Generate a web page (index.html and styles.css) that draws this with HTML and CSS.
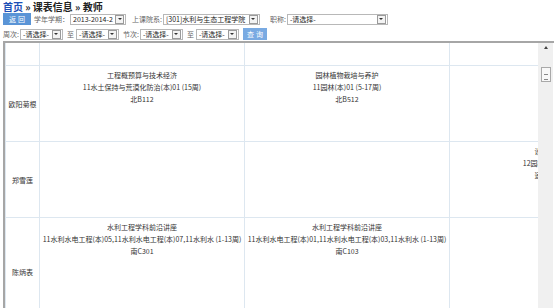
FILE: index.html
```
<!DOCTYPE html>
<html>
<head>
<meta charset="utf-8">
<title>教师课表</title>
<link rel="stylesheet" href="styles.css">
</head>
<body>
<div class="crumb"><a class="home" href="#">首页</a> » 课表信息 » 教师</div>

<div class="bar">
<span class="btn btn-back">返回</span>
<span class="lbl lbl-term">学年学期：</span>
<span class="sel sel-term"><span class="v">2013-2014-2</span><span class="arr"></span></span>
<span class="lbl lbl-dept">上课院系:</span>
<span class="sel sel-dept"><span class="v">[301]水利与生态工程学院</span><span class="arr"></span></span>
<span class="lbl lbl-title">职称:</span>
<span class="sel sel-title"><span class="v">-请选择-</span><span class="arr"></span></span>
</div>

<div class="bar bar-second">
<span class="lbl">周次:</span>
<span class="sel sel-small"><span class="v">-请选择-</span><span class="arr"></span></span>
<span class="lbl lbl-to">至</span>
<span class="sel sel-small"><span class="v">-请选择-</span><span class="arr"></span></span>
<span class="lbl lbl-sec">节次:</span>
<span class="sel sel-small"><span class="v">-请选择-</span><span class="arr"></span></span>
<span class="lbl lbl-to">至</span>
<span class="sel sel-small"><span class="v">-请选择-</span><span class="arr"></span></span>
<span class="btn btn-query">查询</span>
</div>

<div class="frame">
<div class="grid-wrap">
<table class="sched">
<colgroup><col class="c-name"><col class="c-day"><col class="c-day"><col class="c-day"></colgroup>
<tr class="head"><td></td><td></td><td></td><td></td></tr>
<tr class="r1">
<td class="name">欧阳菊根</td>
<td>工程概预算与技术经济<br>11水土保持与荒漠化防治(本)01 (15周)<br>北B112</td>
<td>园林植物栽培与养护<br>11园林(本)01 (5-17周)<br>北B512</td>
<td></td>
</tr>
<tr class="r2">
<td class="name">郑雪莲</td>
<td></td>
<td></td>
<td>设施园艺学<br>12园林(本)01 (5周)<br>速写教室一</td>
</tr>
<tr class="r3">
<td class="name">陈炳表</td>
<td>水利工程学科前沿讲座<br>11水利水电工程(本)05,11水利水电工程(本)07,11水利水 (1-13周)<br>南C301</td>
<td>水利工程学科前沿讲座<br>11水利水电工程(本)01,11水利水电工程(本)03,11水利水 (1-13周)<br>南C103</td>
<td></td>
</tr>
</table>
</div>
<div class="vscroll"><span class="up"></span><span class="thumb"></span></div>
</div>
</body>
</html>
```
FILE: styles.css
```
/* Teacher timetable page */

html, body
{ margin: 0;
}

body
{ padding: 0 3px;
width: 554px;
height: 308px;
box-sizing: border-box;
overflow: hidden;
background: #fff;
font-family: "Noto Sans CJK SC", "Noto Sans", sans-serif;
font-size: 7px;
color: #333;
}

div.crumb
{ line-height: 13px;
font-size: 10px;
font-weight: bold;
color: #222;
white-space: nowrap;
}

a.home
{ color: #1d4fb6;
text-decoration: none;
}

/* Search bars */

div.bar
{ display: flex;
align-items: center;
height: 12px;
white-space: nowrap;
}

div.bar-second
{ margin-top: 3px;
}

span.btn
{ display: inline-block;
height: 12px;
line-height: 12px;
text-align: center;
color: #fff;
letter-spacing: 2px;
text-indent: 2px;
}

span.btn-back
{ width: 28px;
margin-right: 3px;
background-color: #5a94d6;
}

span.btn-query
{ width: 24px;
margin-left: 4px;
background-color: #79aae2;
}

span.lbl
{ color: #666;
margin-right: 1px;
}

span.lbl-dept
{ margin-left: 6px;
}

span.lbl-title
{ margin-left: 10px;
}

span.lbl-to
{ margin: 0 2px 0 4px;
}

span.lbl-sec
{ margin-left: 4px;
}

span.sel
{ display: flex;
align-items: center;
height: 11px;
box-sizing: border-box;
border: 1px solid #b8b8b8;
background: #fff;
padding-left: 2px;
}

span.sel .v
{ flex: 1;
color: #222;
overflow: hidden;
}

span.sel .arr
{ display: flex;
align-items: center;
justify-content: center;
width: 7px;
height: 7px;
margin-right: 1px;
border: 1px solid #9a9a9a;
background: #f3f3f3;
}

span.sel .arr::after
{ content: "";
border-left: 2px solid transparent;
border-right: 2px solid transparent;
border-top: 2px solid #333;
}

span.sel-term { width: 56px; }
span.sel-dept { width: 97px; }
span.sel-title { width: 101px; }
span.sel-small { width: 43px; }

/* Timetable frame */

div.frame
{ display: flex;
margin-top: 1px;
width: 550px;
height: 280px;
border-top: 2px solid #a6a6a6;
border-left: 2px solid #a6a6a6;
}

div.grid-wrap
{ flex: none;
width: 533px;
overflow: hidden;
}

table.sched
{ border-collapse: collapse;
table-layout: fixed;
width: 649px;
}

col.c-name { width: 34px; }
col.c-day { width: 205px; }

table.sched td
{ border: 1px solid #dde7f0;
border-top-color: #e6eef5;
padding: 3px 0 0;
vertical-align: top;
text-align: center;
line-height: 12px;
white-space: nowrap;
color: #333;
}

table.sched td.name
{ vertical-align: middle;
padding: 0;
}

tr.head td { height: 19px; border-top: 0; }
tr.r1 td { height: 72px; }
tr.r2 td { height: 72px; }
tr.r3 td { height: 104px; }

/* Scroll bar */

div.vscroll
{ flex: none;
display: flex;
flex-direction: column;
align-items: center;
width: 15px;
background: #f0f0f0;
}

div.vscroll .up
{ margin-top: 3px;
border-left: 2px solid transparent;
border-right: 2px solid transparent;
border-bottom: 3px solid #444;
}

div.vscroll .thumb
{ margin-top: 18px;
width: 8px;
height: 13px;
border: 1px solid #a9a9a9;
background: #f8f8f8 repeating-linear-gradient(#f8f8f8 0 4px, #888 4px 5px) no-repeat;
background-size: 4px 11px;
background-position: 2px 2px;
}
```
